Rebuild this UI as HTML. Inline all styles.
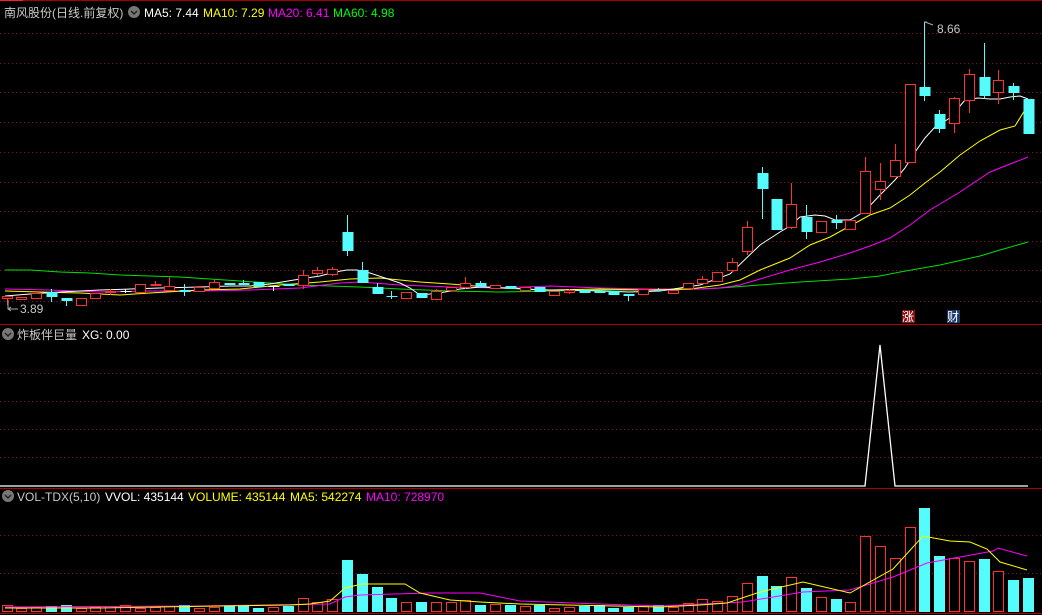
<!DOCTYPE html>
<html><head><meta charset="utf-8"><style>
html,body{margin:0;padding:0;background:#000;width:1042px;height:615px;overflow:hidden}
svg{display:block}
text{font-family:"Liberation Sans","Noto Sans CJK SC",sans-serif;font-size:12px}
</style></head><body>
<svg id="s" width="1042" height="615" xmlns="http://www.w3.org/2000/svg">
<rect width="1042" height="615" fill="#000"/>
<line x1="0" y1="0.5" x2="1042" y2="0.5" stroke="#a00000"/>
<line x1="0" y1="0.5" x2="23" y2="0.5" stroke="#ff2020"/>
<g id="grid" stroke="#8a1010" stroke-dasharray="1,3"></g>
<line x1="0" y1="324.5" x2="1042" y2="324.5" stroke="#b00000"/>
<line x1="0" y1="488.5" x2="1042" y2="488.5" stroke="#b00000"/>
<line x1="0" y1="613.5" x2="1042" y2="613.5" stroke="#b00000"/>
<g id="ma"></g>
<g id="c"></g>
<g id="v"></g>
<text x="4" y="17" fill="#c8c8c8">南风股份(日线.前复权)</text>
<circle cx="134" cy="12" r="6" fill="#777"/><path d="M131 11l3 3 3-3" stroke="#222" fill="none" stroke-width="1.5"/>
<text x="144" y="17" fill="#fff">MA5: 7.44</text>
<text x="203" y="17" fill="#ffff00">MA10: 7.29</text>
<text x="268" y="17" fill="#ff00ff">MA20: 6.41</text>
<text x="333" y="17" fill="#00ff00">MA60: 4.98</text>
<circle cx="8" cy="334" r="6" fill="#777"/><path d="M5 333l3 3 3-3" stroke="#222" fill="none" stroke-width="1.5"/>
<text x="17" y="339" fill="#c8c8c8">炸板伴巨量</text>
<text x="82" y="339" fill="#fff">XG: 0.00</text>
<circle cx="8" cy="496" r="6" fill="#777"/><path d="M5 495l3 3 3-3" stroke="#222" fill="none" stroke-width="1.5"/>
<text x="17" y="501" fill="#c8c8c8">VOL-TDX(5,10)</text>
<text x="105" y="501" fill="#fff">VVOL: 435144</text>
<text x="188" y="501" fill="#ffff00">VOLUME: 435144</text>
<text x="290" y="501" fill="#ffff00">MA5: 542274</text>
<text x="366" y="501" fill="#ff00ff">MA10: 728970</text>
<path d="M924 22h3M925 22l8 3" stroke="#aaa" fill="none"/>
<text x="937" y="33" fill="#c8c8c8">8.66</text>
<path d="M8 300v9h10M8 309l3-2M8 309l3 2" stroke="#aaa" fill="none"/>
<text x="20" y="313" fill="#c8c8c8">3.89</text>
<rect x="902" y="310" width="13" height="13" fill="#8b1010"/><text x="902" y="321" fill="#fff">涨</text>
<rect x="947" y="310" width="13" height="13" fill="#1a3a6a"/><text x="947" y="321" fill="#fff">财</text>
<polyline points="0,486 865,486 880,345 895,486 1028,486" stroke="#fff" stroke-width="1.3" fill="none"/>
</svg>
<script>
var NS="http://www.w3.org/2000/svg";
function el(p,t,a){var e=document.createElementNS(NS,t);for(var k in a)e.setAttribute(k,a[k]);document.getElementById(p).appendChild(e);return e;}
[33,63,92,122,152,182,211,241,270,301,373,401,429,457,535,573].forEach(function(y){el("grid","line",{x1:0,y1:y+.5,x2:1042,y2:y+.5});});
var C=[
['r',296,298,296,305],['r',297,299,297,299],['r',293,298,293,298],['c',292,297,289,302],['c',298,301,298,306],
['r',298,305,298,305],['r',293,298,293,298],['r',291,292,289,295],['w',291,292,289,293],['r',284,292,284,292],
['rf',284,286,281,286],['r',286,290,277,290],['c',290,292,284,296],['r',287,291,287,291],['r',282,288,280,288],
['c',283,285,283,285],['c',283,285,280,285],['c',282,287,282,287],['w',286,287,286,291],['c',284,286,284,286],
['r',275,285,270,289],['r',270,273,267,276],['r',269,274,267,276],['c',232,251,215,256],['c',270,283,262,283],
['c',287,294,283,294],['c',296,297,291,299],['r',292,298,292,298],['c',293,298,293,298],['r',291,299,289,299],
['r',287,290,287,290],['r',283,287,277,289],['c',283,287,281,287],['r',285,288,285,288],['c',286,289,286,289],
['r',287,290,287,290],['c',287,292,287,292],['r',291,295,291,295],['r',290,292,289,294],['c',290,293,290,293],
['c',291,293,291,293],['c',291,295,291,295],['c',294,296,294,301],['r',289,294,289,294],['c',290,291,288,291],
['r',290,293,290,293],['r',283,288,283,288],['r',279,283,276,283],['r',272,281,272,281],['r',262,270,258,272],
['r',227,251,221,255],['c',173,189,167,219],['c',199,230,199,230],['r',204,227,183,229],['c',217,232,205,239],
['r',221,232,221,232],['c',220,223,215,229],['r',220,229,220,229],['r',171,213,157,213],['r',181,189,163,200],
['r',160,176,144,176],['r',84,162,84,162],['c',87,96,22,101],['c',114,129,110,133],['r',98,123,97,133],
['r',74,100,69,113],['c',77,96,43,99],['r',80,92,70,104],['c',86,93,83,100],['c',99,134,99,134]];
var N=C.length;function X(i){return 6.5+i*(1021.5/(N-1));}
C.forEach(function(d,i){var x=Math.round(X(i))+.5,t=d[0];
 var col=t[0]=='r'?'#ff3030':(t=='w'?'#fff':'#54fcfc');
 el("c","line",{x1:x,y1:d[3],x2:x,y2:d[4],stroke:col});
 var h=Math.max(d[2]-d[1],1);
 if(t=='r')el("c","rect",{x:x-5,y:d[1]+.5,width:10,height:h,fill:'#000',stroke:col});
 else el("c","rect",{x:x-5,y:d[1],width:11,height:h,fill:col});
});
function pl(g,pts,c){el(g,"polyline",{points:pts.map(function(p){return p.join(',')}).join(' '),stroke:c,fill:'none','stroke-width':1});}
pl("ma",[[5,270],[30,270],[60,272],[90,273],[120,275],[150,276],[180,277],[210,279],[240,281],[270,283],[300,285],[330,286],[360,287],[400,289],[450,291],[500,292],[550,291],[600,290],[650,290],[700,289],[720,288],[760,285],[800,282],[850,279],[880,276],[900,272],[940,265],[980,256],[1000,250],[1028,242]],'#00e000');
pl("ma",[[5,289],[50,290],[100,292],[150,291],[200,291],[250,290],[300,288],[340,283],[360,282],[400,285],[450,287],[500,288],[550,286],[600,288],[650,289],[700,289],[720,288],[740,285],[760,279],[790,270],[820,262],[850,253],[870,246],[890,238],[910,225],[930,210],[960,192],[990,172],[1028,157]],'#ff00ff');
pl("ma",[[5,291],[40,292],[80,293],[120,295],[150,293],[200,290],[240,289],[280,285],[320,282],[350,279],[380,278],[400,280],[420,282],[450,284],[500,288],[550,290],[600,289],[650,290],[690,289],[720,285],[740,280],[760,270],[790,258],[810,245],[830,237],[850,226],[870,215],[890,208],[910,195],[925,183],[940,172],[960,155],[980,141],[1000,130],[1015,126],[1028,105]],'#ffff00');
pl("ma",[[5,296],[30,294],[60,292],[100,290],[130,289],[160,288],[200,287],[230,286],[250,286],[270,284],[300,279],[320,276],[335,272],[347,270],[357,270],[370,273],[385,278],[400,283],[410,288],[420,295],[430,294],[445,292],[460,289],[480,287],[510,288],[540,290],[570,290],[600,291],[630,292],[660,291],[680,288],[700,285],[730,274],[760,245],[780,232],[790,226],[800,217],[815,215],[825,216],[835,220],[850,220],[865,211],[880,195],[895,180],[905,168],[913,155],[925,138],[935,127],[950,118],[965,100],[978,98],[990,99],[1000,99],[1010,97],[1020,96],[1028,99]],'#ffffff');
var VT={20:598,21:602,22:599,23:560,24:574,25:587,26:598,27:602,28:602,29:602,30:602,31:600,32:605,33:604,34:605,
45:607,46:603,47:599,48:601,49:596,50:583,51:576,52:586,53:577,54:588,55:597,56:599,57:602,58:536,59:546,60:558,61:527,62:508,63:556,64:558,65:561,66:559,67:571,68:580,69:578};
C.forEach(function(d,i){var x=Math.round(X(i)),t=d[0],top=VT[i]||(605+(i*7)%4);
 var col=t[0]=='r'||t=='w'?'#ff3030':'#54fcfc';
 if(t[0]=='r'||t=='w')el("v","rect",{x:x-4.5,y:top+.5,width:10,height:611-top,fill:'#000',stroke:col});
 else el("v","rect",{x:x-5,y:top,width:11,height:612-top,fill:col});
});
pl("v",[[5,607],[200,606],[330,604],[345,597],[360,595],[430,593],[480,593],[520,601],[600,604],[660,606],[743,602],[803,592],[850,590],[893,577],[927,563],[993,551],[998,548],[1027,556]],'#ff00ff');
pl("v",[[5,608],[100,608],[220,606],[290,605],[310,604],[330,601],[345,588],[362,584],[375,584],[405,584],[420,593],[450,600],[480,602],[520,604],[660,607],[700,605],[727,603],[760,592],[803,582],[850,593],[893,569],[923,536],[950,541],[970,542],[987,549],[1000,562],[1027,570]],'#ffff00');
</script>
</body></html>
